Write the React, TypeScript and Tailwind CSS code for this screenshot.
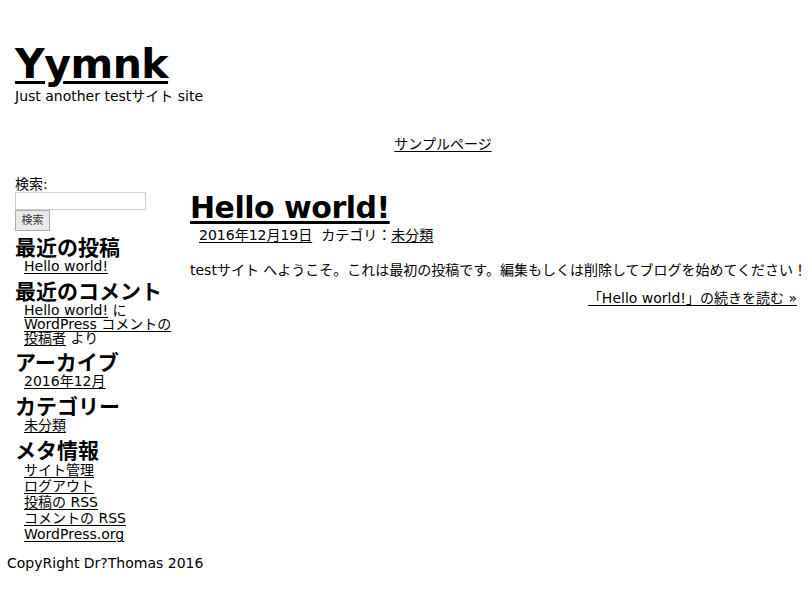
import React from "react";

const sidebarLinks = "underline decoration-1 underline-offset-2 text-black";

const Widget = ({ title, children }: { title: string; children: React.ReactNode }) => (
  <div className="mb-[7px]">
    <h2 className="text-[21px] font-bold leading-[22px]">{title}</h2>
    <ul className="pl-[9px] leading-[15px]">{children}</ul>
  </div>
);

export default function App() {
  return (
    <div className="min-h-[600px] bg-white text-[14px] text-black font-['DejaVu_Sans','Noto_Sans_CJK_JP',sans-serif]">
      {/* header */}
      <header className="px-[15px] pt-[41px]">
        <h1 className="text-[41px] font-bold leading-[47px] tracking-[-0.5px]">
          <a href="#" className="underline decoration-[3px] underline-offset-[3px]">Yymnk</a>
        </h1>
        <p className="leading-[16px]">Just another testサイト site</p>
      </header>

      <nav className="flex justify-center pl-[76px] pt-[32px]">
        <a href="#" className="underline underline-offset-2 leading-[16px]">サンプルページ</a>
      </nav>

      <div className="flex pt-[24px]">
        {/* sidebar */}
        <aside className="w-[190px] shrink-0 pl-[15px]">
          <div className="leading-[16px]">検索:</div>
          <input
            type="text"
            className="block h-[18px] w-[131px] border border-[#cfcfcf] bg-white"
          />
          <button className="mb-[6px] block h-[21px] w-[35px] border border-[#adadad] bg-[#e9e9e9] text-[11px] leading-none text-[#333]">
            検索
          </button>

          <Widget title="最近の投稿">
            <li><a href="#" className={sidebarLinks}>Hello world!</a></li>
          </Widget>
          <Widget title="最近のコメント">
            <li className="max-w-[152px] leading-[14px]">
              <a href="#" className={sidebarLinks}>Hello world!</a> に{" "}
              <a href="#" className={sidebarLinks}>WordPress コメントの投稿者</a> より
            </li>
          </Widget>
          <Widget title="アーカイブ">
            <li><a href="#" className={sidebarLinks}>2016年12月</a></li>
          </Widget>
          <Widget title="カテゴリー">
            <li><a href="#" className={sidebarLinks}>未分類</a></li>
          </Widget>
          <Widget title="メタ情報">
            <li className="leading-[16px]"><a href="#" className={sidebarLinks}>サイト管理</a></li>
            <li className="leading-[16px]"><a href="#" className={sidebarLinks}>ログアウト</a></li>
            <li className="leading-[16px]"><a href="#" className={sidebarLinks}>投稿の RSS</a></li>
            <li className="leading-[16px]"><a href="#" className={sidebarLinks}>コメントの RSS</a></li>
            <li className="leading-[16px]"><a href="#" className={sidebarLinks}>WordPress.org</a></li>
          </Widget>
        </aside>

        {/* main */}
        <main className="min-w-0 flex-1 pr-[13px] pt-[15px]">
          <h2 className="text-[30px] font-bold leading-[34px] tracking-[-0.5px]">
            <a href="#" className="underline decoration-[3px] underline-offset-[3px]">Hello world!</a>
          </h2>
          <div className="pl-[9px] pt-[2px] leading-[16px]">
            <a href="#" className="underline underline-offset-2">2016年12月19日</a>
            <span className="ml-[9px]">カテゴリ：</span>
            <a href="#" className="underline underline-offset-2">未分類</a>
          </div>
          <p className="pt-[19px] leading-[16px] whitespace-nowrap">
            testサイト へようこそ。これは最初の投稿です。編集もしくは削除してブログを始めてください！
          </p>
          <div className="flex justify-end pt-[12px] leading-[16px]">
            <a href="#" className="underline underline-offset-2">「Hello world!」の続きを読む »</a>
          </div>
        </main>
      </div>

      <footer className="pl-[7px] pt-[6px] leading-[16px]">CopyRight Dr?Thomas 2016</footer>
    </div>
  );
}
